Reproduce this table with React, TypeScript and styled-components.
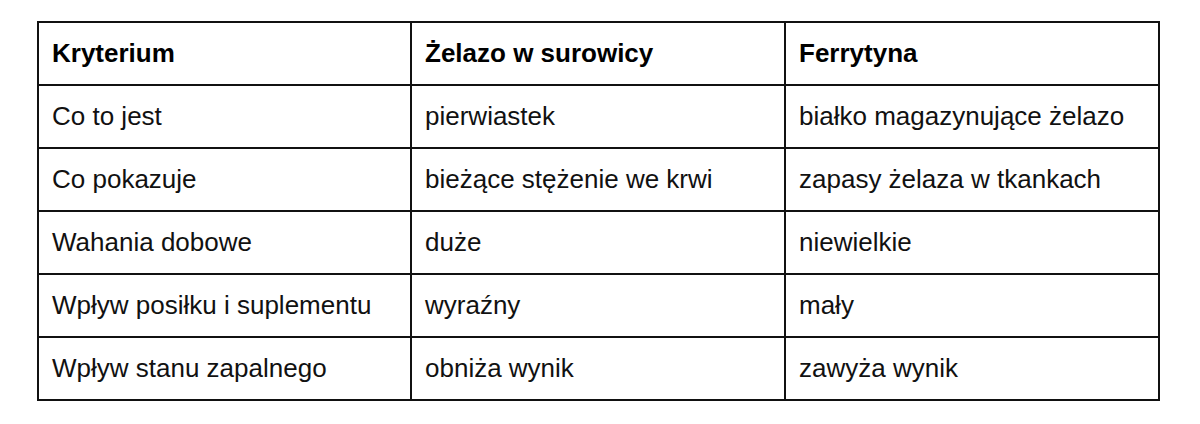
import styled, { createGlobalStyle } from "styled-components";

const GlobalStyle = createGlobalStyle`
  html, body {
    margin: 0;
    padding: 0;
    background: #ffffff;
  }
  body {
    font-family: "Liberation Sans", Arial, sans-serif;
    color: #000;
  }
`;

const rows = [
  ["Co to jest", "pierwiastek", "białko magazynujące żelazo"],
  ["Co pokazuje", "bieżące stężenie we krwi", "zapasy żelaza w tkankach"],
  ["Wahania dobowe", "duże", "niewielkie"],
  ["Wpływ posiłku i suplementu", "wyraźny", "mały"],
  ["Wpływ stanu zapalnego", "obniża wynik", "zawyża wynik"],
];

const App = () => {
  return (
    <Page>
      <GlobalStyle />
      <Table>
        <colgroup>
          <col style={{ width: 373 }} />
          <col style={{ width: 374 }} />
          <col style={{ width: 374 }} />
        </colgroup>
        <thead>
          <tr>
            <HeadCell>Kryterium</HeadCell>
            <HeadCell>Żelazo w surowicy</HeadCell>
            <HeadCell>Ferrytyna</HeadCell>
          </tr>
        </thead>
        <tbody>
          {rows.map((row) => (
            <tr key={row[0]}>
              {row.map((cell, i) => (
                <Cell key={i}>{cell}</Cell>
              ))}
            </tr>
          ))}
        </tbody>
      </Table>
    </Page>
  );
};

const Page = styled.div`
  width: 1200px;
  height: 424px;
  padding: 21px 0 0 37px;
  box-sizing: border-box;
  background: #fff;
`;

const Table = styled.table`
  border-collapse: collapse;
  table-layout: fixed;
  width: 1123px;
  border: 2px solid #111;
`;

const Cell = styled.td`
  height: 63px;
  padding: 0 0 0 13px;
  border: 2px solid #111;
  font-size: 26px;
  color: #111;
  text-align: left;
  vertical-align: middle;
  white-space: nowrap;
  box-sizing: border-box;
`;

const HeadCell = styled(Cell).attrs({ as: "th" })`
  font-weight: bold;
  color: #000;
`;

export default App;
